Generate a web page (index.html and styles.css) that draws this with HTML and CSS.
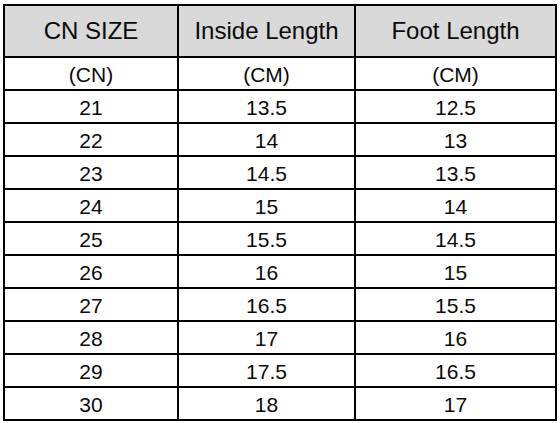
FILE: index.html
```html
<!DOCTYPE html>
<html>
<head>
<meta charset="utf-8">
<link rel="stylesheet" href="styles.css">
</head>
<body>
<div class="chart">
  <div class="cell head">CN SIZE</div>
  <div class="cell head">Inside Length</div>
  <div class="cell head">Foot Length</div>
  <div class="cell">(CN)</div><div class="cell">(CM)</div><div class="cell">(CM)</div>
  <div class="cell">21</div><div class="cell">13.5</div><div class="cell">12.5</div>
  <div class="cell">22</div><div class="cell">14</div><div class="cell">13</div>
  <div class="cell">23</div><div class="cell">14.5</div><div class="cell">13.5</div>
  <div class="cell">24</div><div class="cell">15</div><div class="cell">14</div>
  <div class="cell">25</div><div class="cell">15.5</div><div class="cell">14.5</div>
  <div class="cell">26</div><div class="cell">16</div><div class="cell">15</div>
  <div class="cell">27</div><div class="cell">16.5</div><div class="cell">15.5</div>
  <div class="cell">28</div><div class="cell">17</div><div class="cell">16</div>
  <div class="cell">29</div><div class="cell">17.5</div><div class="cell">16.5</div>
  <div class="cell">30</div><div class="cell">18</div><div class="cell">17</div>
</div>
</body>
</html>
```
FILE: styles.css
```css
html, body {
  margin: 0;
  padding: 0;
  background: #ffffff;
}
body {
  font-family: "Liberation Sans", Arial, sans-serif;
  color: #0a0a0a;
  padding: 4px 0 0 3px;
}
.chart {
  display: grid;
  grid-template-columns: 174px 177px 201px;
  grid-template-rows: 52px;
  grid-auto-rows: 33px;
  border-top: 2px solid #000;
  border-left: 2px solid #000;
  width: max-content;
}
.cell {
  box-sizing: border-box;
  border-right: 2px solid #000;
  border-bottom: 2px solid #000;
  display: flex;
  align-items: center;
  justify-content: center;
  font-size: 21px;
  padding-top: 3px;
}
.head {
  background: #d9d9d9;
  font-size: 24px;
  padding-top: 0;
}
```
